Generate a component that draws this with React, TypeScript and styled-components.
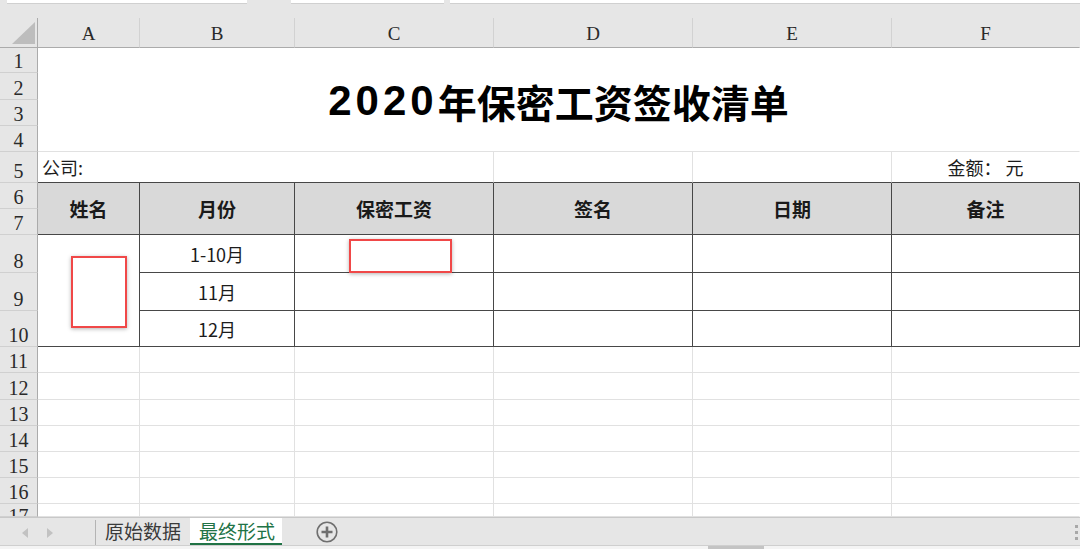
import styled, { createGlobalStyle } from "styled-components";

const GlobalStyle = createGlobalStyle`
  html, body {
    margin: 0;
    padding: 0;
    background: #e6e6e6;
    overflow: hidden;
  }
`;

type Edge = "none" | "grid" | "dark";

const edgeColor = (e: Edge) =>
  e === "dark" ? "#474747" : e === "grid" ? "#e1e1e1" : "transparent";

const COLS = [38, 102, 155, 199, 199, 199, 188];
const ROWS = [25, 27, 26, 26, 31, 26, 26, 38, 38, 36, 26, 27, 26, 26, 26, 26, 13];

const Page = styled.div`
  width: 1080px;
  height: 549px;
  display: flex;
  flex-direction: column;
  background: #e6e6e6;
  font-family: "Noto Sans CJK SC", "Noto Sans", sans-serif;
`;

const TopStrip = styled.div`
  height: 18px;
  display: flex;
  align-items: flex-start;
  flex-shrink: 0;
`;

const FieldBox = styled.div<{ $w: number; $gap: number }>`
  width: ${(p) => p.$w}px;
  margin-left: ${(p) => p.$gap}px;
  height: 3px;
  background: #fff;
  border-bottom: 1px solid #d0d0d0;
`;

const SheetWrap = styled.div`
  position: relative;
  flex-shrink: 0;
`;

const Grid = styled.div`
  display: grid;
  grid-template-columns: ${COLS.map((c) => c + "px").join(" ")};
  grid-template-rows: 30px ${ROWS.map((r) => r + "px").join(" ")};
  background: #fff;
  overflow: hidden;
`;

const Corner = styled.div`
  background: #e6e6e6;
  border-right: 1px solid #ababab;
  border-bottom: 1px solid #ababab;
  box-sizing: border-box;
  display: flex;
  align-items: flex-end;
  justify-content: flex-end;
  padding: 0 1px 2px 0;
`;

const ColHead = styled.div<{ $last?: boolean }>`
  background: #e6e6e6;
  box-sizing: border-box;
  border-bottom: 1px solid #ababab;
  border-right: 1px solid ${(p) => (p.$last ? "transparent" : "#d2d2d2")};
  display: flex;
  align-items: flex-end;
  justify-content: center;
  padding-bottom: 3px;
  font-family: "Liberation Serif", "DejaVu Serif", serif;
  font-size: 19px;
  line-height: 20px;
  color: #2a2a2a;
`;

const RowHead = styled.div<{ $top?: boolean }>`
  background: #e6e6e6;
  box-sizing: border-box;
  border-right: 1px solid #ababab;
  border-bottom: 1px solid #d0d0d0;
  display: flex;
  align-items: ${(p) => (p.$top ? "flex-start" : "flex-end")};
  justify-content: center;
  padding: ${(p) => (p.$top ? "2px 0 0" : "0 0 1px")};
  font-family: "Liberation Serif", "DejaVu Serif", serif;
  font-size: 20px;
  line-height: 20px;
  color: #2a2a2a;
  overflow: hidden;
`;

const Cell = styled.div<{
  $cols?: number;
  $rows?: number;
  $r?: Edge;
  $b?: Edge;
  $bg?: string;
  $align?: string;
}>`
  grid-column: span ${(p) => p.$cols ?? 1};
  grid-row: span ${(p) => p.$rows ?? 1};
  box-sizing: border-box;
  background: ${(p) => p.$bg ?? "#fff"};
  border-right: 1px solid ${(p) => edgeColor(p.$r ?? "grid")};
  border-bottom: 1px solid ${(p) => edgeColor(p.$b ?? "grid")};
  display: flex;
  align-items: center;
  justify-content: ${(p) => p.$align ?? "center"};
  padding: 0 4px;
  font-size: 18px;
  color: #1c1c1c;
  white-space: nowrap;
  overflow: hidden;
`;

const HeadCell = styled(Cell)`
  font-size: 19px;
  font-weight: 700;
  color: #1a1a1a;
`;

const Title = styled(Cell)`
  font-size: 39px;
  font-weight: 700;
  color: #000;
  padding-top: 2px;
`;

const TitleYear = styled.span`
  font-family: "Liberation Sans", Arial, sans-serif;
  font-size: 42px;
  letter-spacing: 4px;
`;

const Mark = styled.div<{ $x: number; $y: number; $w: number; $h: number }>`
  position: absolute;
  left: ${(p) => p.$x}px;
  top: ${(p) => p.$y}px;
  width: ${(p) => p.$w}px;
  height: ${(p) => p.$h}px;
  box-sizing: border-box;
  border: 2px solid #f04848;
  background: #fff;
  box-shadow: 0 1px 4px rgba(0, 0, 0, 0.3);
`;

const TabBar = styled.div`
  height: 28px;
  flex-shrink: 0;
  box-sizing: border-box;
  border-top: 1px solid #c8c8c8;
  display: flex;
  align-items: stretch;
  position: relative;
`;

const NavArrows = styled.div`
  width: 96px;
  display: flex;
  align-items: center;
  gap: 19px;
  padding-left: 22px;
  box-sizing: border-box;
  border-right: 1px solid #b4b4b4;
  margin: 2px 0 0;
`;

const Tab = styled.div<{ $active?: boolean }>`
  display: flex;
  align-items: center;
  padding: ${(p) => (p.$active ? "0 7px 0 9px" : "0 9px 0 5px")};
  margin-left: ${(p) => (p.$active ? "0" : "4px")};
  font-size: 19px;
  color: ${(p) => (p.$active ? "#217346" : "#3a3a3a")};
  background: ${(p) => (p.$active ? "#fff" : "transparent")};
  border-bottom: 2px solid ${(p) => (p.$active ? "#217346" : "transparent")};
`;

const AddButton = styled.div`
  display: flex;
  align-items: center;
  margin-left: 34px;
`;

const Grip = styled.div`
  position: absolute;
  right: 2px;
  top: 7px;
  display: flex;
  flex-direction: column;
  gap: 3px;
  span {
    width: 3px;
    height: 3px;
    background: #a8a8a8;
  }
`;

const ScrollStrip = styled.div`
  flex: 1;
  border-top: 1px solid #cfcfcf;
  background: #f4f4f4;
  display: flex;
`;

const Thumb = styled.div`
  margin-left: 708px;
  width: 56px;
  background: #c4c4c4;
`;

const letters = ["A", "B", "C", "D", "E", "F"];
const heads = ["姓名", "月份", "保密工资", "签名", "日期", "备注"];
const months = ["1-10月", "11月", "12月"];

const App = () => {
  return (
    <Page>
      <GlobalStyle />
      <TopStrip>
        <FieldBox $w={240} $gap={7} />
        <FieldBox $w={153} $gap={44} />
        <FieldBox $w={630} $gap={6} />
      </TopStrip>
      <SheetWrap>
        <Grid>
          <Corner>
            <svg width="25" height="24" viewBox="0 0 25 24">
              <polygon points="1,23 24,23 24,1" fill="#bdbdbd" />
            </svg>
          </Corner>
          {letters.map((l, i) => (
            <ColHead key={l} $last={i === letters.length - 1}>
              {l}
            </ColHead>
          ))}

          <RowHead>1</RowHead>
          <Title $cols={6} $rows={4} $r="none">
            <TitleYear>2020</TitleYear>年保密工资签收清单
          </Title>
          <RowHead>2</RowHead>
          <RowHead>3</RowHead>
          <RowHead>4</RowHead>

          <RowHead>5</RowHead>
          <Cell $cols={3} $align="flex-start" $b="dark">
            公司:
          </Cell>
          <Cell $b="dark" />
          <Cell $b="dark" />
          <Cell $b="dark" $r="none">
            金额：&nbsp;元
          </Cell>

          <RowHead>6</RowHead>
          {heads.map((h) => (
            <HeadCell key={h} $rows={2} $bg="#d9d9d9" $r="dark" $b="dark">
              {h}
            </HeadCell>
          ))}
          <RowHead>7</RowHead>

          {months.map((m, i) => (
            <>
              <RowHead key={"rh" + i}>{8 + i}</RowHead>
              {i === 0 && <Cell $rows={3} $r="dark" $b="dark" />}
              <Cell key={"m" + i} $r="dark" $b="dark">
                {m}
              </Cell>
              {[0, 1, 2, 3].map((c) => (
                <Cell key={"c" + i + c} $r="dark" $b="dark" />
              ))}
            </>
          ))}

          {[11, 12, 13, 14, 15, 16, 17].map((n) => (
            <>
              <RowHead key={"r" + n} $top={n === 17}>
                {n}
              </RowHead>
              {[0, 1, 2, 3, 4, 5].map((c) => (
                <Cell key={n + "-" + c} $r={c === 5 ? "none" : "grid"} />
              ))}
            </>
          ))}
        </Grid>
        <Mark $x={71} $y={238} $w={56} $h={72} />
        <Mark $x={349} $y={221} $w={103} $h={34} />
      </SheetWrap>
      <TabBar>
        <NavArrows>
          <svg width="6" height="10" viewBox="0 0 6 10">
            <polygon points="6,0 6,10 0,5" fill="#c2c2c2" />
          </svg>
          <svg width="6" height="10" viewBox="0 0 6 10">
            <polygon points="0,0 0,10 6,5" fill="#c2c2c2" />
          </svg>
        </NavArrows>
        <Tab>原始数据</Tab>
        <Tab $active>最终形式</Tab>
        <AddButton>
          <svg width="22" height="22" viewBox="0 0 22 22">
            <circle cx="11" cy="11" r="9.8" fill="none" stroke="#6f6f6f" strokeWidth="1.6" />
            <path d="M11 5.5v11M5.5 11h11" stroke="#6f6f6f" strokeWidth="2.6" />
          </svg>
        </AddButton>
        <Grip>
          <span />
          <span />
          <span />
        </Grip>
      </TabBar>
      <ScrollStrip>
        <Thumb />
      </ScrollStrip>
    </Page>
  );
};

export default App;
